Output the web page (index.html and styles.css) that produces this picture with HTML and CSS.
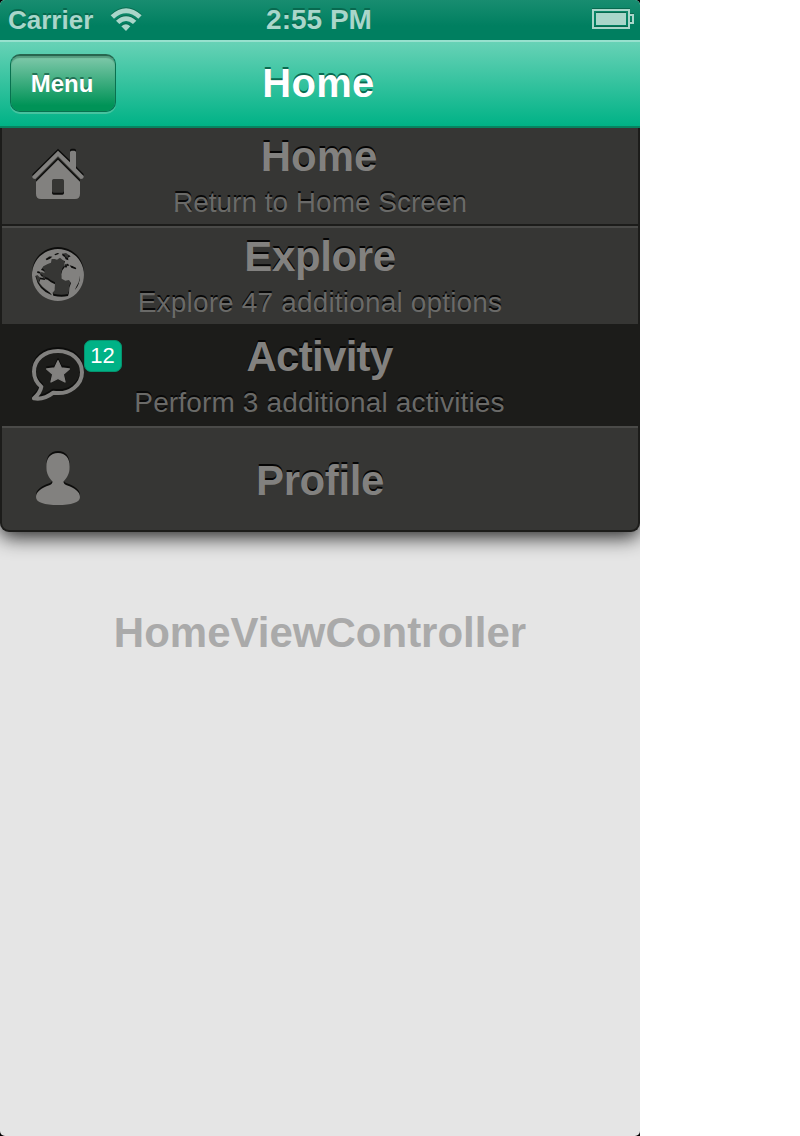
FILE: index.html
```html
<!DOCTYPE html>
<html lang="en">
<head>
<meta charset="utf-8">
<title>Home</title>
<link rel="stylesheet" href="styles.css">
</head>
<body>
<div class="device">
  <div class="screen">
    <div class="status">
      <div class="carrier"><span>Carrier</span>
        <svg class="wifi" viewBox="330 18 99 78"><path d="M332 46Q378 4 425 46L415 56Q378 24 342 56Z"/><path d="M348 62Q378 36 409 62L399 72Q378 54 358 72Z"/><path d="M364 79Q378 66 391 79L378 93Z"/></svg>
      </div>
      <div class="time">2:55 PM</div>
      <svg class="battery" viewBox="0 0 42 20"><path d="M1 1H37V19H1ZM38 6H41V14H38" fill="none" stroke="#a9d6ca" stroke-width="2"/><path class="charge" d="M4 4H34V16H4Z"/></svg>
    </div>
    <header class="navbar">
      <button class="menu-button">Menu</button>
      <h1>Home</h1>
    </header>
    <nav class="menu">
      <div class="row home">
        <svg class="icon" viewBox="84 69 180 180"><path d="M97 169L174 92L210 127V97Q210 92 215 92H223Q228 92 228 97V145L251 168Q252 177 242 177L174 109L106 177Q96 177 97 169Z"/><path fill-rule="evenodd" d="M174 119L240 185V222Q240 237 225 237H123Q108 237 108 222V185ZM161 177Q156 177 156 182V219Q156 224 161 224H187Q192 224 192 219V182Q192 177 187 177Z"/></svg>
        <div class="labels"><div class="title">Home</div><div class="sub">Return to Home Screen</div></div>
      </div>
      <div class="row explore">
        <svg class="icon" viewBox="84 57 180 180"><path fill-rule="evenodd" d="M174 72A78 78 0 1 1 173.900 72Z
M155 102L164 102L171 104L180 98L187 104L195 109L192 119L194 127L187 136L184 148L185 161L196 167L207 165L213 174L208 188L207 203L204 213Q184 218 160 212L158 203L164 196L165 178L153 172L143 164L134 162L123 153L119 144L125 141L135 145L130 138L123 135L130 124L143 117L153 113Z
M106 153L112 150L119 157L136 161L134 165L121 163L118 173L128 185L150 203L156 211Q115 196 106 153Z
M113 138L124 142L120 146L111 143Z
M137 102L148 94L157 95L150 101L140 106ZM163 88L173 84L178 86L166 91ZM186 86L198 84L212 94L204 98L205 106L197 103L194 96L188 92Z
M194 117L204 116L208 122L202 122L199 128L194 126ZM209 121L218 123L229 129L227 133L214 128Z
M240 152Q240 178 224 196L230 183L236 172Z"/></svg>
        <div class="labels"><div class="title">Explore</div><div class="sub">Explore 47 additional options</div></div>
      </div>
      <div class="row activity">
        <svg class="icon" viewBox="84 69 180 180"><path d="M174 93C133 93 102 119 102 155C102 174 110 188 124 200Q121 218 102 235Q132 240 160 218C210 226 246 193 246 157C246 120 214 93 174 93Z" fill="none" stroke="#82817f" stroke-width="12" stroke-linejoin="round"/><path d="M174 122L184 144L208 147L190 163L195 186L174 175L153 186L158 163L140 147L164 144Z" stroke="#82817f" stroke-width="4" stroke-linejoin="round"/></svg>
        <span class="badge">12</span>
        <div class="labels"><div class="title">Activity</div><div class="sub">Perform 3 additional activities</div></div>
      </div>
      <div class="row profile">
        <svg class="icon" viewBox="84 69 180 180"><path d="M174 84C151 84 138 101 139 125C139 146 147 158 157 169Q159 177 148 181C124 189 108 201 108 216C108 233 134 240 174 240S240 233 240 216C240 201 224 189 200 181Q189 177 191 169C201 158 209 146 209 125C210 101 197 84 174 84Z"/></svg>
        <div class="labels"><div class="title">Profile</div></div>
      </div>
    </nav>
    <main class="content">HomeViewController</main>
  </div>
</div>
</body>
</html>
```
FILE: styles.css
```css
body { margin: 0; background: #fff; font-family: "Liberation Sans", Arial, sans-serif; }
.device { width: 640px; height: 1136px; background: #000; }
.screen { height: 1136px; background: #e5e5e5; border-radius: 5px; overflow: hidden; }
.status { display: grid; grid-template-columns: 1fr 120px 1fr; height: 40px; box-sizing: border-box; padding: 0 6px 0 8px; background: linear-gradient(#188d70, #007f60 65%); color: #a9d6ca; font-weight: bold; text-shadow: 0 -2px 0 #08694f; }
.status svg { fill: #a9d6ca; filter: drop-shadow(0 -1px 0 #08694f); }
.carrier { display: flex; font-size: 26px; line-height: 40px; gap: 17px; }
.wifi { width: 33px; height: 26px; margin-top: 6px; }
.time { font-size: 28px; line-height: 39px; text-align: center; white-space: nowrap; padding-right: 4px; }
.battery { width: 42px; height: 20px; margin-top: 9px; justify-self: end; }
.navbar { position: relative; z-index: 1; display: grid; grid-template-columns: 106px 1fr 106px; height: 88px; padding: 0 10px; box-sizing: border-box; background: linear-gradient(#67d2b6, #00b286); border-top: 2px solid #97e1ce; border-bottom: 2px solid #078460; }
.menu-button { width: 106px; height: 58px; margin: 12px 0 0; padding: 0 2px 0 0; border: 1px solid #08714f; border-top: 2px solid #28664f; border-radius: 10px; background: linear-gradient(#80c9ab, #009357 90%) padding-box; box-shadow: 0 2px 0 #46c39f, inset 0 2px 1px #569b7f; color: #fff; font: bold 24px/54px "Liberation Sans", Arial, sans-serif; text-shadow: 0 -2px 0 #237356; }
.navbar h1 { margin: 0; padding-right: 3px; font-size: 40px; line-height: 83px; letter-spacing: .3px; text-align: center; color: #fff; text-shadow: 0 -2px 0 #096b50; }
.menu { height: 404px; box-sizing: border-box; border: 2px solid #1c1c1a; border-top: 0; border-radius: 0 0 9px 9px; background: #363634; box-shadow: 0 5px 20px rgba(0,0,0,.85); overflow: hidden; }
.row { position: relative; display: grid; grid-template-columns: 86px 464px 86px; box-sizing: border-box; }
.home { height: 98px; border-bottom: 2px solid #1c1c1a; }
.explore { height: 98px; box-shadow: inset 0 2px 0 #4a4a48; }
.activity { height: 102px; background: #1c1c1a; }
.profile { height: 104px; box-shadow: inset 0 2px 0 #4a4a48; }
.icon { width: 60px; height: 60px; margin: 15px 0 0 26px; fill: #82817f; filter: drop-shadow(0 -2px 0 #0c0c0b); }
.explore .icon { margin-top: 18px; }
.activity .icon { margin-top: 19px; }
.profile .icon { margin-top: 22px; }
.labels { grid-column: 2; text-align: center; padding-top: 4px; white-space: nowrap; }
.explore .labels { padding-top: 6px; }
.activity .labels { padding-top: 8px; }
.profile .labels { padding-top: 30px; }
.title { font-size: 42px; line-height: 50px; font-weight: bold; color: #82817f; text-shadow: 0 -2px 0 #050505; }
.home .title { padding-right: 2px; }
.explore .title { letter-spacing: -.4px; }
.activity .title { letter-spacing: -.7px; padding-right: 1px; }
.profile .title { letter-spacing: -.4px; }
.sub { margin-top: 5px; font-size: 28px; line-height: 32px; color: #6a6a68; text-shadow: 0 -2px 0 #080808; }
.explore .sub { letter-spacing: .17px; }
.activity .sub { letter-spacing: .15px; padding-right: 1px; }
.badge { position: absolute; left: 82px; top: 16px; width: 38px; height: 32px; box-sizing: border-box; padding-right: 1px; border: 1px solid #04936e; border-radius: 7px; background: #00b286; color: #fff; font-size: 22px; line-height: 30px; text-align: center; }
.content { margin-top: 76px; font-size: 42px; line-height: 50px; font-weight: bold; color: #aaa; text-align: center; }
```
